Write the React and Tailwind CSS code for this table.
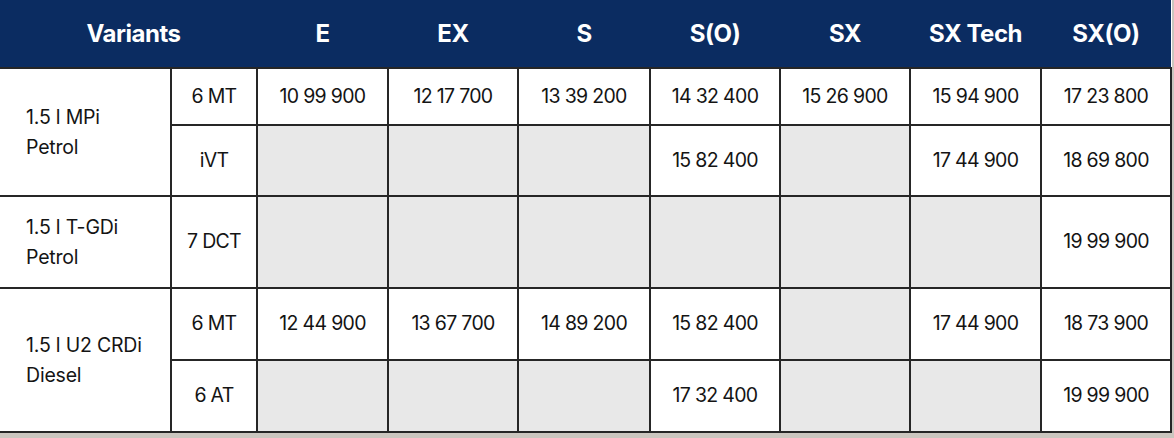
import React from 'react';

const cols = ['E', 'EX', 'S', 'S(O)', 'SX', 'SX Tech', 'SX(O)'];
const widths = [171, 86, 131, 130, 132, 130, 130, 131, 130];

const rows = [
  { engine: ['1.5 l MPi', 'Petrol'], span: 2, trans: '6 MT', h: 'h-[57px]', prices: ['10 99 900', '12 17 700', '13 39 200', '14 32 400', '15 26 900', '15 94 900', '17 23 800'] },
  { trans: 'iVT', h: 'h-[71px]', prices: [null, null, null, '15 82 400', null, '17 44 900', '18 69 800'] },
  { engine: ['1.5 l T-GDi', 'Petrol'], span: 1, trans: '7 DCT', h: 'h-[92px]', prices: [null, null, null, null, null, null, '19 99 900'] },
  { engine: ['1.5 l U2 CRDi', 'Diesel'], span: 2, trans: '6 MT', h: 'h-[72px]', prices: ['12 44 900', '13 67 700', '14 89 200', '15 82 400', null, '17 44 900', '18 73 900'] },
  { trans: '6 AT', h: 'h-[72px]', prices: [null, null, null, '17 32 400', null, null, '19 99 900'] },
];

const cell = 'border-2 border-[#262626] text-center align-middle';

export default function App() {
  return (
    <div className="w-[1174px] h-[438px] overflow-hidden bg-[#cbc6bf]" style={{ fontFamily: 'Inter, "Open Sans", sans-serif' }}>
      <table className="table-fixed border-collapse w-[1172px] bg-white text-[#141414]">
        <colgroup>
          {widths.map((w, i) => <col key={i} style={{ width: w }} />)}
        </colgroup>
        <thead>
          <tr className="h-[68px] bg-[#0b2c61] text-white text-[24px] font-bold tracking-[-0.02em]">
            <th colSpan={2} className="text-center border-b-2 border-[#262626] font-bold pl-[10px]">Variants</th>
            {cols.map(c => (
              <th key={c} className="text-center border-b-2 border-[#262626] font-bold">{c}</th>
            ))}
          </tr>
        </thead>
        <tbody className="text-[19.5px] tracking-[-0.035em]">
          {rows.map((r, i) => (
            <tr key={i} className={r.h}>
              {r.engine && (
                <td rowSpan={r.span} className="border-2 border-[#262626] border-l-0 text-left align-middle pl-[26px] text-[19.5px] leading-[30px] tracking-[-0.01em]">
                  <div>{r.engine[0]}</div>
                  <div>{r.engine[1]}</div>
                </td>
              )}
              <td className={cell}>{r.trans}</td>
              {r.prices.map((p, j) => (
                <td key={j} className={`${cell} ${p ? 'bg-white' : 'bg-[#e8e8e8]'}`}>{p}</td>
              ))}
            </tr>
          ))}
        </tbody>
      </table>
    </div>
  );
}
